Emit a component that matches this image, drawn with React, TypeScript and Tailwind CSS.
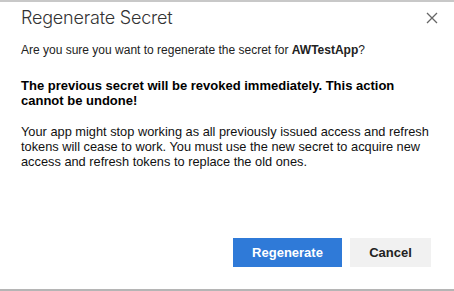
import React from "react";

const App: React.FC = () => {
  return (
    <div className="h-[291px] w-[454px] overflow-hidden bg-white font-['Liberation_Sans',Arial,sans-serif] text-[#222]">
      <div className="h-[2px] bg-[#c8c8c8]" />
      <div className="flex h-[287px] flex-col">
        {/* header */}
        <div className="flex items-center justify-between pl-[21px] pr-[16px] pt-[4px]">
          <h2 className="font-['Inter',sans-serif] text-[18px] font-light leading-[24px] tracking-[-0.2px] text-[#333]">
            Regenerate Secret
          </h2>
          <svg width="12" height="12" viewBox="0 0 12 12" className="-mt-[1px]">
            <path d="M1 1L11 11M11 1L1 11" stroke="#666" strokeWidth="1.3" />
          </svg>
        </div>

        {/* body */}
        <div className="px-[21px] pt-[12px]">
          <p className="text-[12px] leading-[16px]">
            Are you sure you want to regenerate the secret for{" "}
            <span className="font-bold">AWTestApp</span>?
          </p>
          <p className="mt-[20px] text-[13px] font-bold leading-[15px] text-black">
            The previous secret will be revoked immediately. This action
            <br />
            cannot be undone!
          </p>
          <p className="mt-[16px] text-[12.8px] leading-[15px] text-[#111]">
            Your app might stop working as all previously issued access and refresh
            tokens will cease to work. You must use the new secret to acquire new
            access and refresh tokens to replace the old ones.
          </p>
        </div>

        {/* footer */}
        <div className="mt-auto flex justify-end gap-[8px] pb-[22px] pr-[23px]">
          <button className="h-[29px] w-[109px] bg-[#2f7ad8] text-[13px] font-bold text-white">
            Regenerate
          </button>
          <button className="h-[29px] w-[81px] bg-[#f1f1f1] text-[13px] font-bold text-[#222]">
            Cancel
          </button>
        </div>
      </div>
      <div className="h-[2px] bg-[#b5b5b5]" />
    </div>
  );
};

export default App;
